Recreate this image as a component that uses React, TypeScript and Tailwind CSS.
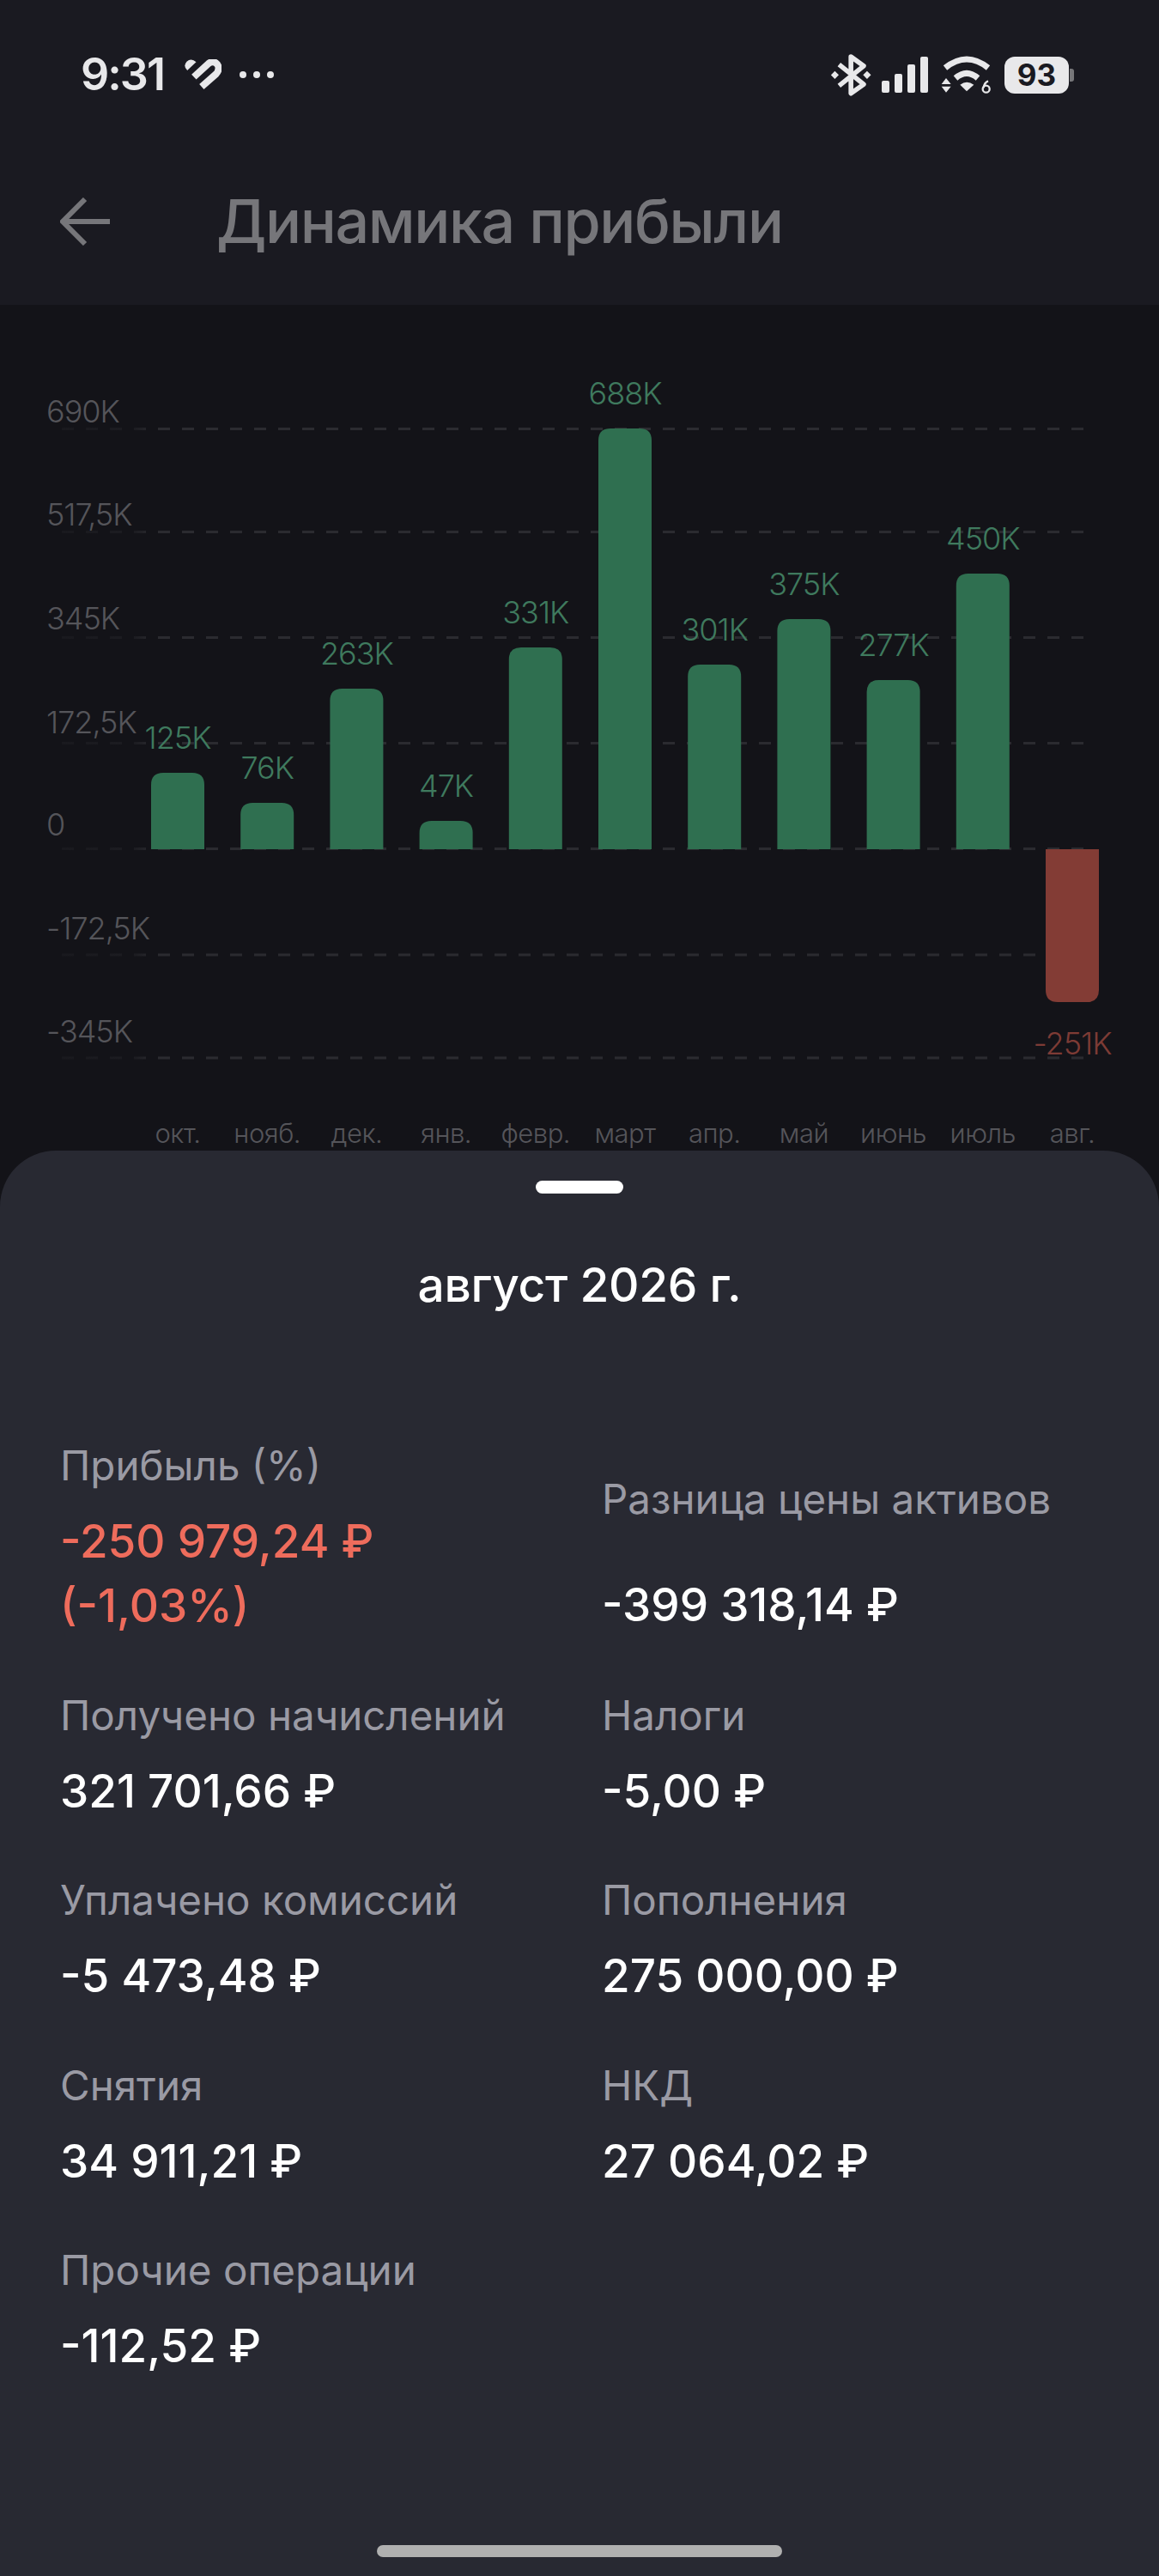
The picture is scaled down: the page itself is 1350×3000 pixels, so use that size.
const bars = [
  { m: "окт.", v: "125K", top: 900 },
  { m: "нояб.", v: "76K", top: 935 },
  { m: "дек.", v: "263K", top: 802 },
  { m: "янв.", v: "47K", top: 956 },
  { m: "февр.", v: "331K", top: 754 },
  { m: "март", v: "688K", top: 499 },
  { m: "апр.", v: "301K", top: 774 },
  { m: "май", v: "375K", top: 721 },
  { m: "июнь", v: "277K", top: 792 },
  { m: "июль", v: "450K", top: 668 },
];
const BASE = 989;
const gridY = [499.5, 619.5, 742.5, 865.5, 988.5, 1112, 1232];
const axis: [string, number][] = [
  ["690K", 492],
  ["517,5K", 612],
  ["345K", 733],
  ["172,5K", 854],
  ["0", 973],
  ["-172,5K", 1094],
  ["-345K", 1214],
];

function Chart() {
  return (
    <svg viewBox="0 355 1350 985" className="block w-[1350px] h-[985px]">
      <defs>
        <linearGradient id="fade" gradientUnits="userSpaceOnUse" x1="70" y1="0" x2="180" y2="0">
          <stop offset="0" stopColor="#2b2b30" stopOpacity="0.25" />
          <stop offset="0.8" stopColor="#2b2b30" stopOpacity="0.4" />
          <stop offset="1" stopColor="#2b2b30" stopOpacity="1" />
        </linearGradient>
      </defs>
      {gridY.map((y) => (
        <path key={y} d={`M70 ${y}H1266`} stroke="url(#fade)" strokeWidth="3" strokeDasharray="14 14" strokeDashoffset="-2" fill="none" />
      ))}
      {axis.map(([t, y]) => (
        <text key={t} x="54" y={y} className="fill-[#55555a] text-[36px] tracking-[-1px] font-light font-[family-name:Inter,sans-serif]">
          {t}
        </text>
      ))}
      {bars.map((b, i) => {
        const x = 176 + i * 104.2;
        return (
          <g key={b.m}>
            <path
              d={`M${x} ${BASE}V${b.top + 14}Q${x} ${b.top} ${x + 14} ${b.top}H${x + 48}Q${x + 62} ${b.top} ${x + 62} ${b.top + 14}V${BASE}Z`}
              fill="#2f6f50"
            />
            <text x={x + 31} y={b.top - 28} textAnchor="middle" className="fill-[#3f7a5e] text-[36px] tracking-[-1px] font-light font-[family-name:Inter,sans-serif]">
              {b.v}
            </text>
            <text x={x + 31} y="1331" textAnchor="middle" className="fill-[#55555a] text-[31px] tracking-[-0.5px] font-light font-[family-name:Inter,sans-serif]">
              {b.m}
            </text>
          </g>
        );
      })}
      <path d="M1218 989H1280V1153Q1280 1167 1266 1167H1232Q1218 1167 1218 1153Z" fill="#833c35" />
      <text x="1249" y="1228" textAnchor="middle" className="fill-[#7d3b35] text-[36px] tracking-[-1px] font-light font-[family-name:Inter,sans-serif]">
        -251K
      </text>
      <text x="1249" y="1331" textAnchor="middle" className="fill-[#55555a] text-[31px] tracking-[-0.5px] font-light font-[family-name:Inter,sans-serif]">
        авг.
      </text>
    </svg>
  );
}

function Heart() {
  return (
    <svg viewBox="465 118 128 108" className="w-[43px] h-[36px]">
      <path d="M474 157L505 128Q488 112 472 126Q458 142 474 157Z" fill="#e8e8ea" />
      <path d="M497 180L548 133Q565 120 579 136Q590 152 574 170L524 214" fill="none" stroke="#e8e8ea" strokeWidth="24" />
    </svg>
  );
}

function Bluetooth() {
  return (
    <svg viewBox="355 90 142 155" className="w-[47px] h-[51px]">
      <path d="M383 130L470 200L425 232V102L470 135L383 205" fill="none" stroke="#e8e8ea" strokeWidth="17" strokeLinejoin="round" />
      <path d="M368 153L382 167L368 181L354 167ZM482 153L496 167L482 181L468 167Z" fill="#e8e8ea" />
    </svg>
  );
}

function Signal() {
  return (
    <svg viewBox="0 0 54 42" className="w-[54px] h-[42px]">
      <rect x="0" y="28" width="9" height="14" rx="2" fill="#e8e8ea" />
      <rect x="15" y="20" width="9" height="22" rx="2" fill="#e8e8ea" />
      <rect x="30" y="9" width="9" height="33" rx="2" fill="#e8e8ea" />
      <rect x="45" y="0" width="9" height="42" rx="2" fill="#e8e8ea" />
    </svg>
  );
}

function Wifi() {
  return (
    <svg viewBox="735 103 180 138" className="w-[60px] h-[46px]">
      <path d="M750 148Q825 88 900 148" fill="none" stroke="#e8e8ea" strokeWidth="21" />
      <path d="M786 184Q825 150 864 184" fill="none" stroke="#e8e8ea" strokeWidth="21" />
      <path d="M802 207Q825 190 850 207L825 230Z" fill="#e8e8ea" />
      <path d="M753 184L770 205H737ZM737 213H770L753 234Z" fill="#e8e8ea" />
      <circle cx="893" cy="222" r="12" fill="none" stroke="#e8e8ea" strokeWidth="7" />
      <path d="M884 218Q886 200 900 194" fill="none" stroke="#e8e8ea" strokeWidth="7" />
    </svg>
  );
}

function Value({ children, red }: { children: React.ReactNode; red?: boolean }) {
  return (
    <div className={`text-[53px] leading-[75px] font-[550] font-[family-name:Inter,sans-serif] ${red ? "text-[#ee6c5c]" : "text-white"}`}>
      {children}
    </div>
  );
}

function Item({ label, value, red }: { label: string; value: string[]; red?: boolean }) {
  return (
    <div>
      <div className="text-[47.5px] leading-[62px] text-[#9a9aa4]">{label}</div>
      <div className="mt-[20px]">
        {value.map((v) => (
          <Value key={v} red={red}>{v}</Value>
        ))}
      </div>
    </div>
  );
}

export default function App() {
  return (
    <div className="w-[1350px] h-[3000px] flex flex-col bg-[#131318] overflow-hidden font-[family-name:Inter,sans-serif]">
      <header className="h-[355px] shrink-0 bg-[#1a1a21] flex flex-col">
        <div className="h-[174px] pl-[94px] pr-[99px] flex items-center justify-between">
          <div className="flex items-center">
            <span className="w-[96px] text-[52px] tracking-[-2px] leading-none font-semibold text-[#e8e8ea]">9:31</span>
            <span className="ml-[25px]"><Heart /></span>
            <span className="ml-[21px] flex gap-[8px]">
              <i className="block w-[8px] h-[8px] rounded-full bg-[#e8e8ea]" />
              <i className="block w-[8px] h-[8px] rounded-full bg-[#e8e8ea]" />
              <i className="block w-[8px] h-[8px] rounded-full bg-[#e8e8ea]" />
            </span>
          </div>
          <div className="flex items-center">
            <Bluetooth />
            <span className="ml-[12px]"><Signal /></span>
            <span className="ml-[15px]"><Wifi /></span>
            <span className="ml-[14px] flex items-center">
              <span className="w-[75px] h-[43px] rounded-[12px] bg-[#e8e8ea] flex items-center justify-center text-[35px] font-bold text-[#1a1a21]">93</span>
              <span className="ml-[1px] w-[5px] h-[15px] rounded-r-[3px] bg-[#77777a]" />
            </span>
          </div>
        </div>
        <div className="h-[181px] pb-[14px] pl-[70px] flex items-center">
          <svg viewBox="0 0 58 56" className="w-[58px] h-[56px]">
            <path d="M58 28H3M29 2L3 28L29 54" fill="none" stroke="#76767a" strokeWidth="6" />
          </svg>
          <h1 className="ml-[124px] text-[70px] tracking-[-1.4px] leading-none font-medium text-[#76767a]">Динамика прибыли</h1>
        </div>
      </header>

      <Chart />

      <section className="flex-1 rounded-t-[65px] bg-[#282932] flex flex-col items-center">
        <div className="mt-[35px] w-[102px] h-[15px] rounded-full bg-white" />
        <div className="mt-[69px] text-[55px] tracking-[-0.3px] leading-[74px] font-medium text-white">август 2026 г.</div>
        <div className="self-stretch mt-[143px] pl-[70px] grid grid-cols-[631px_1fr] gap-y-[58.5px]">
          <Item label="Прибыль (%)" value={["-250 979,24 ₽", "(-1,03%)"]} red />
          <div>
            <div className="mt-[39px] text-[47.5px] leading-[62px] text-[#9a9aa4]">Разница цены активов</div>
            <div className="mt-[55px]"><Value>-399 318,14 ₽</Value></div>
          </div>
          <Item label="Получено начислений" value={["321 701,66 ₽"]} />
          <Item label="Налоги" value={["-5,00 ₽"]} />
          <Item label="Уплачено комиссий" value={["-5 473,48 ₽"]} />
          <Item label="Пополнения" value={["275 000,00 ₽"]} />
          <Item label="Снятия" value={["34 911,21 ₽"]} />
          <Item label="НКД" value={["27 064,02 ₽"]} />
          <Item label="Прочие операции" value={["-112,52 ₽"]} />
        </div>
        <div className="mt-auto mb-[22px] w-[472px] h-[14px] rounded-full bg-[#b0b0b0]" />
      </section>
    </div>
  );
}
